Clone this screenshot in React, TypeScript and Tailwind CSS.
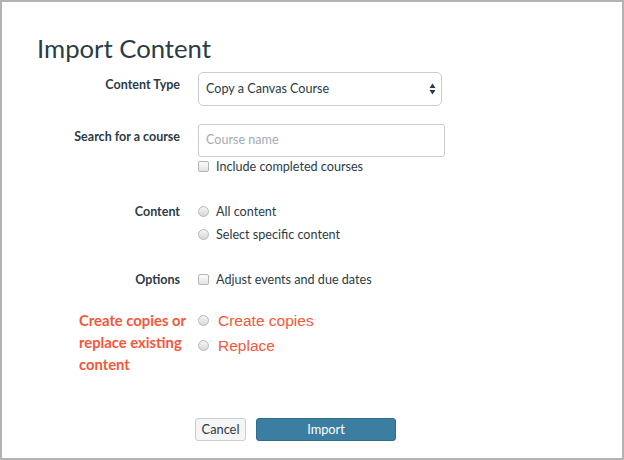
import React from 'react';

function Checkbox() {
  return (
    <span className="inline-block w-[11px] h-[11px] rounded-[2px] border border-[#b4b4b4] bg-gradient-to-b from-[#fbfbfb] to-[#e4e4e4] shrink-0" />
  );
}

function Radio() {
  return (
    <span className="inline-block w-[11px] h-[11px] rounded-full border border-[#b8b8b8] bg-gradient-to-b from-[#f4f4f4] to-[#d9d9d9] shrink-0" />
  );
}

function Label({ children }: { children: React.ReactNode }) {
  return (
    <div className="w-[143px] shrink-0 text-right text-[12.5px] font-bold">{children}</div>
  );
}

export default function App() {
  return (
    <div className="w-[624px] h-[460px] border-2 border-[#b3b3b3] bg-white font-['Lato',sans-serif] text-[#2d3b45] pl-[35px] pt-[31px]">
      <h1 className="text-[25.7px] leading-[1.2] font-normal">Import Content</h1>

      {/* content type */}
      <div className="mt-[8px] flex gap-[18px]">
        <div className="pt-[3px] leading-5">
          <Label>Content Type</Label>
        </div>
        <div className="w-[244px] h-[34px] rounded-[5px] border border-[#c7cdd1] flex items-center justify-between pl-[7px] pr-[5px] text-[12.6px]">
          <span className="pt-[1px]">Copy a Canvas Course</span>
          <svg width="7" height="12" viewBox="0 0 7 12" className="text-[#2d3b45]">
            <path d="M3.5 0.5 L6.5 5 L0.5 5 Z" fill="currentColor" />
            <path d="M3.5 11.5 L6.5 7 L0.5 7 Z" fill="currentColor" />
          </svg>
        </div>
      </div>

      {/* search */}
      <div className="mt-[18px] flex gap-[18px]">
        <div className="pt-[3px] leading-5">
          <Label>Search for a course</Label>
        </div>
        <div>
          <div className="w-[247px] h-[33px] rounded-[3px] border border-[#c7cdd1] flex items-center pl-[7px] text-[12.6px] text-[#a5abaf]">
            Course name
          </div>
          <div className="flex items-center gap-[7px] text-[12.6px] leading-5">
            <Checkbox />
            <span>Include completed courses</span>
          </div>
        </div>
      </div>

      {/* content */}
      <div className="mt-[23px] flex gap-[18px] leading-[23px]">
        <Label>Content</Label>
        <div className="text-[12.6px]">
          <div className="flex items-center gap-[7px]">
            <Radio />
            <span>All content</span>
          </div>
          <div className="flex items-center gap-[7px]">
            <Radio />
            <span>Select specific content</span>
          </div>
        </div>
      </div>

      {/* options */}
      <div className="mt-[22px] flex gap-[18px] leading-[23px]">
        <Label>Options</Label>
        <div className="flex items-center gap-[7px] text-[12.6px]">
          <Checkbox />
          <span>Adjust events and due dates</span>
        </div>
      </div>

      {/* copies / replace */}
      <div className="mt-[17px] flex gap-[18px] text-[#f5573b]">
        <div className="w-[143px] shrink-0 pl-[42px] pt-[1px] text-[14.8px] font-bold leading-[22px] whitespace-nowrap">
          Create copies or
          <br />
          replace existing
          <br />
          content
        </div>
        <div className="font-['Liberation_Sans',Arial,sans-serif] text-[15.5px] leading-[25px]">
          <div className="flex items-center gap-[9px]">
            <Radio />
            <span>Create copies</span>
          </div>
          <div className="flex items-center gap-[9px]">
            <Radio />
            <span>Replace</span>
          </div>
        </div>
      </div>

      {/* buttons */}
      <div className="mt-[43px] ml-[158px] flex gap-[10px] text-[12.8px]">
        <button className="w-[51px] h-[23px] rounded-[3px] border border-[#c7cdd1] bg-[#f5f5f5] text-[#2d3b45] leading-none">
          Cancel
        </button>
        <button className="w-[140px] h-[23px] rounded-[3px] border border-[#2f6d8f] bg-[#3b7ea1] text-white leading-none">
          Import
        </button>
      </div>
    </div>
  );
}
